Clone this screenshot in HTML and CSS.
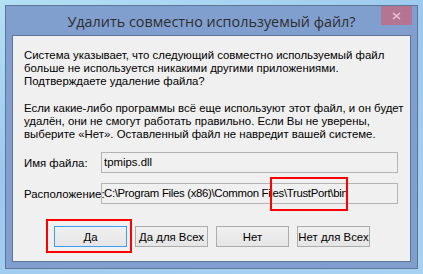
FILE: index.html
```html
<!DOCTYPE html>
<html lang="ru">
<head>
    <meta charset="UTF-8">
    <title>Удалить совместно используемый файл?</title>
    <link rel="stylesheet" href="styles.css">
</head>
<body>

<div class="window">
    <div class="titlebar">
        <span class="title">Удалить совместно используемый файл?</span>
        <span class="close">
            <svg width="9" height="8" viewBox="0 0 9 8"><path d="M1 1 L8 7 M8 1 L1 7" stroke="#e7c4d2" stroke-width="1.6"/></svg>
        </span>
    </div>

    <div class="content">
        <p class="msg">Система указывает, что следующий совместно используемый файл<br>больше не используется никакими другими приложениями.<br>Подтверждаете удаление файла?</p>
        <p class="msg">Если какие-либо программы всё еще используют этот файл, и он будет<br>удалён, они не смогут работать правильно. Если Вы не уверены,<br>выберите «Нет». Оставленный файл не навредит вашей системе.</p>

        <div class="field">
            <span class="label">Имя файла:</span>
            <div class="box">tpmips.dll</div>
        </div>
        <div class="field">
            <span class="label">Расположение:</span>
            <div class="box path">C:\Program Files (x86)\Common Files\TrustPort\bin</div>
        </div>

        <div class="buttons">
            <button class="btn focus">Да</button>
            <button class="btn">Да для Всех</button>
            <button class="btn">Нет</button>
            <button class="btn">Нет для Всех</button>
        </div>

        <!-- красные рамки поверх -->
        <div class="mark mark-path"></div>
        <div class="mark mark-yes"></div>
    </div>
</div>

</body>
</html>
```

FILE: styles.css
```css
body {
    margin: 0;
    width: 423px;
    height: 274px;
    overflow: hidden;
    background: linear-gradient(160deg, #b4e0f4 0%, #9cc8ee 40%, #a8d2f2 100%);
    font-family: "Liberation Sans", Arial, sans-serif;
}
.window {
    margin: 5px 0 0 5px;
    border: 1px solid #5f7595;
    background-color: #809fcf;
    padding: 0 6px 6px 6px;
    box-sizing: border-box;
    width: 413px;
    height: 264px;
    display: flex;
    flex-direction: column;
}
.titlebar {
    height: 29px;
    display: flex;
    align-items: center;
    justify-content: center;
    position: relative;
}
.title {
    font-family: "Open Sans", sans-serif;
    font-size: 14.4px;
    color: #2e2e2e;
    margin-top: 1px;
}
.close {
    position: absolute;
    right: -1px;
    top: 0;
    width: 31px;
    height: 19px;
    background-color: #b47593;
    display: flex;
    align-items: center;
    justify-content: center;
}
.content {
    flex: 1;
    background-color: #f0f0f0;
    border: 1px solid #5f7595;
    position: relative;
    padding: 13px 11px 0 11px;
    font-size: 11.4px;
    color: #000;
}
.msg {
    margin: 0 0 14px 0;
    line-height: 13px;
    white-space: nowrap;
}
.msg + .msg {
    margin-bottom: 11px;
}
.field {
    display: flex;
    align-items: center;
    margin-bottom: 10px;
}
.label {
    width: 77px;
    white-space: nowrap;
}
.box {
    width: 293px;
    height: 19px;
    line-height: 19px;
    border: 1px solid #b4b4b4;
    padding-left: 2px;
    white-space: nowrap;
    overflow: hidden;
}
.box.path {
    letter-spacing: -0.32px;
}
.buttons {
    display: flex;
    gap: 8px;
    padding-left: 30px;
    margin-top: 22px;
}
.btn {
    width: 73px;
    height: 21px;
    font-family: "Liberation Sans", Arial, sans-serif;
    font-size: 11.4px;
    color: #000;
    border: 1px solid #acacac;
    background: linear-gradient(#f0f0f0, #e5e5e5);
    padding: 0;
    white-space: nowrap;
}
.btn.focus {
    border-color: #3c9ef0;
}
.mark {
    position: absolute;
    border: 2px solid #f00;
}
.mark-path {
    left: 257px;
    top: 141px;
    width: 74px;
    height: 30px;
}
.mark-yes {
    left: 33px;
    top: 183px;
    width: 82px;
    height: 30px;
}
```
